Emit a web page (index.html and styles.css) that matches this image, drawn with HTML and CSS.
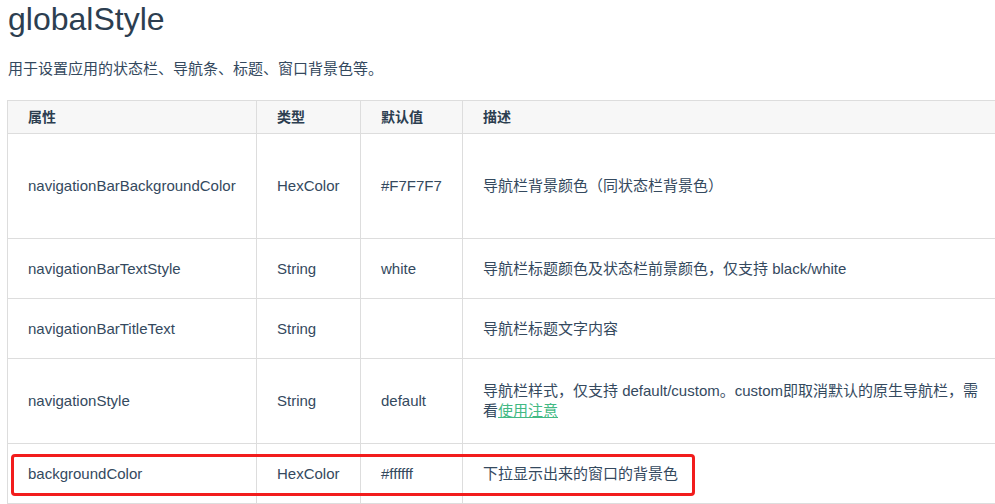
FILE: index.html
```html
<!DOCTYPE html>
<html lang="zh-CN">
<head>
<meta charset="utf-8">
<title>globalStyle</title>
<link rel="stylesheet" href="styles.css">
</head>
<body>
<main class="page">
  <h1 class="title">globalStyle</h1>
  <p class="intro">用于设置应用的状态栏、导航条、标题、窗口背景色等。</p>
  <div class="table-wrap">
    <table class="props">
      <colgroup>
        <col class="c-name">
        <col class="c-type">
        <col class="c-def">
        <col class="c-desc">
      </colgroup>
      <thead>
        <tr class="head-row">
          <th>属性</th>
          <th>类型</th>
          <th>默认值</th>
          <th>描述</th>
        </tr>
      </thead>
      <tbody>
        <tr class="row-tall">
          <td>navigationBarBackgroundColor</td>
          <td>HexColor</td>
          <td>#F7F7F7</td>
          <td>导航栏背景颜色（同状态栏背景色）</td>
        </tr>
        <tr class="row">
          <td>navigationBarTextStyle</td>
          <td>String</td>
          <td>white</td>
          <td>导航栏标题颜色及状态栏前景颜色，仅支持 black/white</td>
        </tr>
        <tr class="row">
          <td>navigationBarTitleText</td>
          <td>String</td>
          <td></td>
          <td>导航栏标题文字内容</td>
        </tr>
        <tr class="row-two">
          <td>navigationStyle</td>
          <td>String</td>
          <td>default</td>
          <td>导航栏样式，仅支持 default/custom。custom即取消默认的原生导航栏，需看<a class="link" href="#">使用注意</a></td>
        </tr>
        <tr class="row">
          <td>backgroundColor</td>
          <td>HexColor</td>
          <td>#ffffff</td>
          <td>下拉显示出来的窗口的背景色</td>
        </tr>
      </tbody>
    </table>
    <div class="highlight"></div>
  </div>
</main>
</body>
</html>
```

FILE: styles.css
```css
html, body {
  margin: 0;
  padding: 0;
  background: #ffffff;
  overflow: hidden;
}

body {
  font-family: "Liberation Sans", Arial, "Noto Sans CJK SC", sans-serif;
  color: #34495e;
  width: 995px;
  height: 504px;
}

.page {
  padding: 0 0 0 8px;
}

.title {
  margin: 1px 0 0 0;
  font-size: 32px;
  font-weight: 400;
  line-height: 37px;
  color: #2c3e50;
}

.intro {
  margin: 19px 0 0 0;
  font-size: 15px;
  line-height: 24px;
  color: #34495e;
}

.table-wrap {
  position: relative;
  margin-top: 19px;
  margin-left: -1px;
}

.props {
  border-collapse: collapse;
  table-layout: fixed;
  width: 997px;
  font-size: 15px;
  line-height: 20px;
}

.c-name { width: 249px; }
.c-type { width: 104px; }
.c-def { width: 102px; }
.c-desc { width: 542px; }

.props th,
.props td {
  border: 1px solid #dddddd;
  padding: 0 20px;
  text-align: left;
  vertical-align: middle;
}

.props th {
  background: #f7f7f7;
  font-weight: 700;
  color: #2c3e50;
  font-size: 14px;
}

.head-row { height: 33px; }
.row-tall { height: 105px; }
.row { height: 60px; }
.row-two { height: 85px; }

.link {
  color: #42b983;
  text-decoration: underline;
}

.highlight {
  position: absolute;
  left: 4px;
  top: 354px;
  width: 678px;
  height: 36px;
  border: 3px solid #f21c1c;
  border-radius: 4px;
}
```
